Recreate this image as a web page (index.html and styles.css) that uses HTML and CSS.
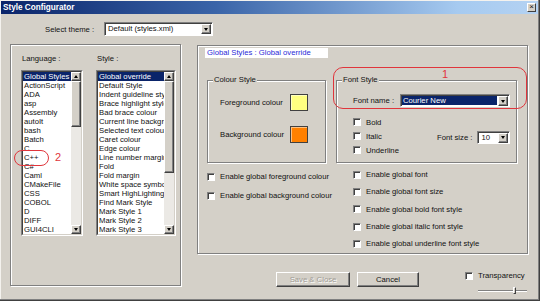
FILE: index.html
```html
<!DOCTYPE html>
<html lang="en">
<head>
  <meta charset="UTF-8">
  <title>Style Configurator</title>
  <link rel="stylesheet" href="styles.css">
</head>
<body>
<div class="window">
  <div class="titlebar">
    <span class="title">Style Configurator</span>
    <span class="close">&times;</span>
  </div>

  <div class="theme-row">
    <span class="theme-label">Select theme :</span>
    <div class="combo theme-combo">
      <span class="combo-text">Default (styles.xml)</span>
      <span class="combo-btn"><i class="arrow-down"></i></span>
    </div>
  </div>

  <div class="main">
    <!-- language / style lists -->
    <div class="left-box">
      <div class="list-col">
        <div class="list-label">Language :</div>
        <div class="listbox lang-list">
          <div class="listbox-in">
            <ul class="items">
              <li class="sel">Global Styles</li>
              <li>ActionScript</li>
              <li>ADA</li>
              <li>asp</li>
              <li>Assembly</li>
              <li>autoIt</li>
              <li>bash</li>
              <li>Batch</li>
              <li>C</li>
              <li>C++</li>
              <li>C#</li>
              <li>Caml</li>
              <li>CMakeFile</li>
              <li>CSS</li>
              <li>COBOL</li>
              <li>D</li>
              <li>DIFF</li>
              <li>GUI4CLI</li>
            </ul>
            <div class="scrollbar">
              <span class="sb-btn"><i class="arrow-up"></i></span>
              <div class="sb-track"><span class="sb-thumb lang-thumb"></span></div>
              <span class="sb-btn"><i class="arrow-down"></i></span>
            </div>
          </div>
        </div>
      </div>
      <div class="list-col">
        <div class="list-label">Style :</div>
        <div class="listbox style-list">
          <div class="listbox-in">
            <ul class="items">
              <li class="sel">Global override</li>
              <li>Default Style</li>
              <li>Indent guideline style</li>
              <li>Brace highlight style</li>
              <li>Bad brace colour</li>
              <li>Current line background colour</li>
              <li>Selected text colour</li>
              <li>Caret colour</li>
              <li>Edge colour</li>
              <li>Line number margin</li>
              <li>Fold</li>
              <li>Fold margin</li>
              <li>White space symbol</li>
              <li>Smart HighLighting</li>
              <li>Find Mark Style</li>
              <li>Mark Style 1</li>
              <li>Mark Style 2</li>
              <li>Mark Style 3</li>
            </ul>
            <div class="scrollbar">
              <span class="sb-btn"><i class="arrow-up"></i></span>
              <div class="sb-track"><span class="sb-thumb style-thumb"></span></div>
              <span class="sb-btn"><i class="arrow-down"></i></span>
            </div>
          </div>
        </div>
      </div>
    </div>

    <div class="right-col">
      <div class="right-box">
        <div class="style-caption">Global Styles : Global override</div>

        <div class="groups">
          <div class="group colour-group">
            <span class="legend">Colour Style</span>
            <div class="colour-row">
              <span class="colour-label">Foreground colour</span>
              <span class="swatch fg"></span>
            </div>
            <div class="colour-row">
              <span class="colour-label">Background colour</span>
              <span class="swatch bg"></span>
            </div>
          </div>

          <div class="group font-group">
            <span class="legend">Font Style</span>
            <div class="font-name-row">
              <span class="font-name-label">Font name :</span>
              <div class="combo font-combo">
                <span class="combo-text"><span class="hl">Courier New</span></span>
                <span class="combo-btn"><i class="arrow-down"></i></span>
              </div>
            </div>
            <div class="font-opts">
              <div class="font-checks">
                <label class="check-row"><span class="cb"></span>Bold</label>
                <label class="check-row"><span class="cb"></span>Italic</label>
                <label class="check-row"><span class="cb"></span>Underline</label>
              </div>
              <div class="font-size">
                <span>Font size :</span>
                <div class="combo size-combo">
                  <span class="combo-text">10</span>
                  <span class="combo-btn"><i class="arrow-down"></i></span>
                </div>
              </div>
            </div>
          </div>
        </div>

        <div class="globals">
          <div class="globals-left">
            <label class="check-row"><span class="cb"></span>Enable global foreground colour</label>
            <label class="check-row"><span class="cb"></span>Enable global background colour</label>
          </div>
          <div class="globals-right">
            <label class="check-row"><span class="cb"></span>Enable global font</label>
            <label class="check-row"><span class="cb"></span>Enable global font size</label>
            <label class="check-row"><span class="cb"></span>Enable global bold font style</label>
            <label class="check-row"><span class="cb"></span>Enable global italic font style</label>
            <label class="check-row"><span class="cb"></span>Enable global underline font style</label>
          </div>
        </div>
      </div>

      <div class="bottom-row">
        <button class="btn disabled">Save &amp; Close</button>
        <button class="btn">Cancel</button>
        <div class="transparency">
          <label class="check-row"><span class="cb"></span>Transparency</label>
          <div class="slider"><span class="slider-thumb"></span></div>
        </div>
      </div>
    </div>
  </div>

  <!-- red annotations drawn over the dialog -->
  <span class="mark mark-cpp"></span>
  <span class="mark-num num-2">2</span>
  <span class="mark mark-font"></span>
  <span class="mark-num num-1">1</span>
</div>
</body>
</html>
```

FILE: styles.css
```css
body {
  margin: 0;
  background: #d4d0c8;
  font-family: "Liberation Sans", Arial, sans-serif;
  font-size: 7.7px;
  color: #111;
}
.window {
  position: relative;
  width: 540px;
  height: 301px;
  background: #d4d0c8;
  box-shadow: inset -1px -1px 0 #404040, inset -2px -2px 0 #808080, inset 1px 1px 0 #f4f2ee;
  overflow: hidden;
}

/* title bar */
.titlebar {
  height: 13px;
  margin: 1px 2px 0 1px;
  display: flex;
  align-items: center;
  justify-content: space-between;
  padding: 0 2px 0 2px;
  background: linear-gradient(to right, #0a246a 0%, #3a64a8 40%, #a6caf0 85%, #b4d2f2 100%);
}
.title {
  color: #fff;
  font-weight: bold;
  font-size: 8.2px;
}
.close {
  width: 7px;
  height: 7px;
  line-height: 6px;
  text-align: center;
  font-size: 8px;
  background: #d4d0c8;
  border: 1px solid;
  border-color: #fff #404040 #404040 #fff;
}

/* raised / sunken helpers */
.sb-btn, .combo-btn, .sb-thumb, .btn {
  background: #d4d0c8;
  border: 1px solid;
  border-color: #fff #404040 #404040 #fff;
  box-shadow: inset -1px -1px 0 #808080;
  box-sizing: border-box;
}
.arrow-down, .arrow-up {
  width: 0;
  height: 0;
  border-left: 2.5px solid transparent;
  border-right: 2.5px solid transparent;
}
.arrow-down { border-top: 3px solid #000; }
.arrow-up { border-bottom: 3px solid #000; }

/* combo boxes */
.combo {
  display: flex;
  box-sizing: border-box;
  height: 13px;
  background: #fff;
  border: 1px solid;
  border-color: #808080 #fff #fff #808080;
  box-shadow: inset 1px 1px 0 #404040;
}
.combo-text {
  flex: 1;
  display: flex;
  padding: 1px 1px 1px 3px;
  line-height: 9px;
  white-space: nowrap;
  overflow: hidden;
}
.combo-btn {
  width: 10px;
  height: 10px;
  margin: 1px 1px 0 0;
  display: flex;
  align-items: center;
  justify-content: center;
}

.theme-row {
  display: flex;
  align-items: center;
  margin-top: 8px;
  padding-left: 45px;
}
.theme-label { width: 59px; }
.theme-combo { width: 109px; height: 14px; }
.theme-combo .combo-text { line-height: 10px; }

.main {
  display: flex;
  margin-top: 8px;
  padding-left: 10px;
}

/* group box with etched border */
.left-box, .right-box, .group {
  box-sizing: border-box;
  border: 1px solid #808080;
  box-shadow: 1px 1px 0 #fff, inset 1px 1px 0 #fff;
}
.left-box {
  width: 171px;
  height: 242px;
  display: flex;
  gap: 13px;
  padding: 9px 0 0 10px;
}
.list-label {
  height: 10px;
  line-height: 10px;
  padding-left: 1px;
  margin-bottom: 6px;
}

.listbox {
  height: 166px;
  box-sizing: border-box;
  border: 1px solid;
  border-color: #808080 #fff #fff #808080;
}
.listbox-in {
  height: 100%;
  box-sizing: border-box;
  border: 1px solid;
  border-color: #404040 #d4d0c8 #d4d0c8 #404040;
  background: #fff;
  display: flex;
}
.lang-list { width: 62px; }
.style-list { width: 80px; }
.items {
  flex: 1;
  margin: 0;
  padding: 0;
  list-style: none;
  overflow: hidden;
}
.items li {
  height: 9px;
  line-height: 9px;
  padding-left: 1px;
  white-space: nowrap;
}
.items li.sel {
  background: #0a246a;
  color: #fff;
}
.scrollbar {
  width: 10px;
  display: flex;
  flex-direction: column;
  background: #ebe9e5;
}
.sb-btn {
  height: 9px;
  display: flex;
  align-items: center;
  justify-content: center;
}
.sb-track { flex: 1; }
.sb-thumb { display: block; }
.lang-thumb { height: 46px; }
.style-thumb { height: 92px; }

/* right side */
.right-col {
  margin-left: 16px;
  width: 331px;
}
.right-box {
  height: 209px;
  margin-top: 1px;
  padding: 2px 0 0 9px;
}
.style-caption {
  width: 123px;
  height: 10px;
  line-height: 10px;
  margin-left: -2px;
  padding-left: 2px;
  box-sizing: border-box;
  background: #fff;
  color: #2a2ad8;
}
.groups {
  display: flex;
  gap: 10px;
  margin-top: 22px;
}
.group {
  height: 83px;
}
.legend {
  display: block;
  width: max-content;
  height: 10px;
  line-height: 10px;
  margin: -6px 0 0 5px;
  padding: 0 1px;
  background: #d4d0c8;
}
.colour-group { width: 119px; }
.colour-row {
  display: flex;
  align-items: center;
  height: 17px;
  padding-left: 12px;
  margin-top: 9px;
}
.colour-row + .colour-row { margin-top: 15px; }
.colour-label { width: 70px; }
.swatch {
  width: 18px;
  height: 17px;
  box-sizing: border-box;
  border: 1px solid #404040;
  box-shadow: inset 1px 1px 0 rgba(255, 255, 255, 0.5);
}
.swatch.fg { background: #ffff80; }
.swatch.bg { background: #ff8000; }

.font-group {
  width: 181px;
  padding-left: 16px;
}
.font-group .legend { margin-left: -11px; }
.font-name-row {
  display: flex;
  align-items: center;
  margin-top: 9px;
}
.font-name-label { width: 47px; }
.font-combo { width: 110px; }
.hl {
  flex: 1;
  margin-left: -2px;
  padding-left: 1px;
  background: #0a246a;
  color: #fff;
}
.font-opts {
  display: flex;
  align-items: center;
  margin-top: 8px;
}
.font-checks { width: 84px; }
.font-checks .check-row { height: 14px; }
.font-size {
  display: flex;
  align-items: center;
  gap: 5px;
  margin-top: 2px;
}
.size-combo { width: 33px; }

.check-row {
  display: flex;
  align-items: center;
  gap: 5px;
  white-space: nowrap;
}
.cb {
  width: 8px;
  height: 8px;
  box-sizing: border-box;
  background: #fff;
  border: 1px solid;
  border-color: #808080 #fff #fff #808080;
  box-shadow: inset 1px 1px 0 #404040;
}

.globals {
  display: flex;
}
.globals-left {
  width: 146px;
  margin-top: 4px;
}
.globals-left .check-row { height: 19px; }
.globals-right { margin-top: 3px; }
.globals-right .check-row { height: 17.3px; }

/* buttons */
.bottom-row {
  display: flex;
  align-items: flex-start;
  margin-top: 18px;
  padding-left: 79px;
}
.btn {
  height: 15px;
  padding: 0;
  font: inherit;
  color: #111;
}
.btn + .btn { margin-left: 7px; }
.btn.disabled {
  width: 74px;
  color: #a09c94;
  text-shadow: 1px 1px 0 #fff;
}
.btn:not(.disabled) { width: 62px; }
.transparency {
  margin: -1px 0 0 46px;
}
.slider {
  position: relative;
  width: 49px;
  height: 2px;
  margin: 10px 0 0 13px;
  border-top: 1px solid #808080;
  border-bottom: 1px solid #fff;
  box-sizing: border-box;
}
.slider-thumb {
  position: absolute;
  left: 35px;
  top: -4px;
  width: 3px;
  height: 7px;
  box-sizing: border-box;
  background: #d4d0c8;
  border: 1px solid;
  border-color: #fff #404040 #404040 #fff;
}

/* red annotations */
.mark {
  position: absolute;
  border: 1.5px solid #e0353c;
  box-sizing: border-box;
}
.mark-cpp {
  left: 14px;
  top: 150px;
  width: 35px;
  height: 16px;
  border-radius: 8px;
}
.mark-font {
  left: 333px;
  top: 67px;
  width: 194px;
  height: 42px;
  border-radius: 10px;
}
.mark-num {
  position: absolute;
  color: #e0353c;
  font-size: 11px;
  line-height: 12px;
}
.num-2 { left: 55px; top: 151px; }
.num-1 { left: 442px; top: 68px; }
```
